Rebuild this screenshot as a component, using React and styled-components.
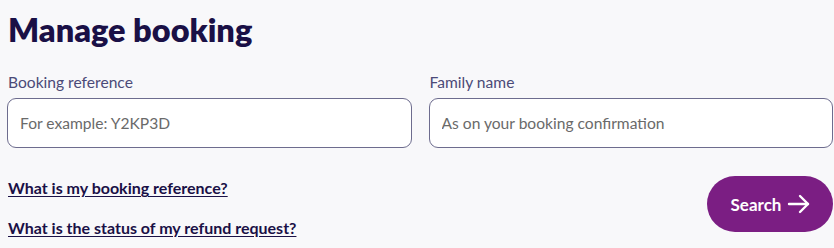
import React from "react";
import styled, { createGlobalStyle } from "styled-components";

const Global = createGlobalStyle`
  html, body { margin: 0; padding: 0; background: #f8f8fa; }
  body { font-family: "Lato", "Noto Sans", sans-serif; }
`;

const Page = styled.div`
  width: 826px;
  padding: 12px 0 0 7px;
  box-sizing: content-box;
`;

const Title = styled.h1`
  margin: 0;
  font-size: 32.5px;
  font-weight: 800;
  color: #1a1046;
  letter-spacing: 0;
  line-height: 36px;
  padding-left: 1px;
`;

const Fields = styled.div`
  display: grid;
  grid-template-columns: 1fr 1fr;
  gap: 17px;
  margin-top: 25px;
`;

const Field = styled.label`
  display: flex;
  flex-direction: column;
  gap: 7px;
`;

const Label = styled.span`
  font-size: 15.6px;
  color: #4b4a78;
  line-height: 18px;
  padding-left: 1px;
`;

const Input = styled.input`
  height: 50px;
  box-sizing: border-box;
  border: 1px solid #6d6c8e;
  border-radius: 9px;
  background: #fff;
  padding: 0 12px;
  font-family: inherit;
  font-size: 15.6px;
  color: #222;
  outline: none;
  &::placeholder { color: #6a6a6a; }
`;

const Bottom = styled.div`
  display: flex;
  justify-content: space-between;
  align-items: flex-start;
  margin-top: 28px;
`;

const Links = styled.div`
  display: flex;
  flex-direction: column;
  gap: 21px;
  padding-top: 2px;
  padding-left: 1px;
`;

const Link = styled.a`
  font-size: 16px;
  font-weight: 700;
  color: #1a1046;
  text-decoration: underline;
  text-underline-offset: 2px;
  line-height: 19px;
`;

const Button = styled.button`
  height: 56px;
  width: 126px;
  border: none;
  border-radius: 28px;
  background: #7b1e83;
  color: #fff;
  font-family: inherit;
  font-size: 17px;
  font-weight: 700;
  display: flex;
  align-items: center;
  justify-content: center;
  gap: 6px;
  padding: 0 0 0 2px;
  cursor: pointer;
`;

const Arrow = () => (
  <svg width="24" height="20" viewBox="0 0 24 20" fill="none" stroke="#fff" strokeWidth="2.4" strokeLinecap="round" strokeLinejoin="round">
    <path d="M2 10h19" />
    <path d="M13 2l8 8-8 8" />
  </svg>
);

export default function App() {
  return (
    <>
      <Global />
      <Page>
        <Title>Manage booking</Title>
        <Fields>
          <Field>
            <Label>Booking reference</Label>
            <Input placeholder="For example: Y2KP3D" />
          </Field>
          <Field>
            <Label>Family name</Label>
            <Input placeholder="As on your booking confirmation" />
          </Field>
        </Fields>
        <Bottom>
          <Links>
            <Link href="#">What is my booking reference?</Link>
            <Link href="#">What is the status of my refund request?</Link>
          </Links>
          <Button>
            Search <Arrow />
          </Button>
        </Bottom>
      </Page>
    </>
  );
}
